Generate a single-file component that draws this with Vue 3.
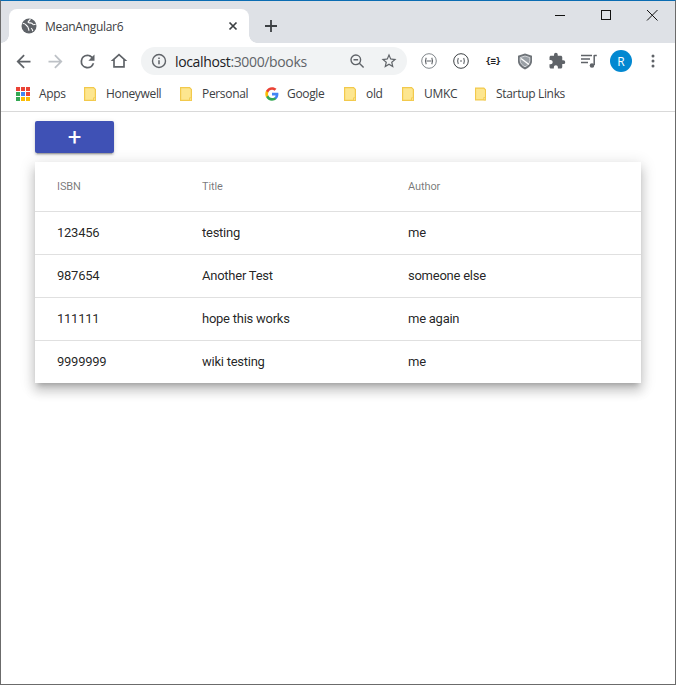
<script setup>
const bookmarks = [
  { label: 'Honeywell', kind: 'folder', width: 96 },
  { label: 'Personal', kind: 'folder', width: 85 },
  { label: 'Google', kind: 'google', width: 79 },
  { label: 'old', kind: 'folder', width: 58 },
  { label: 'UMKC', kind: 'folder', width: 73 },
  { label: 'Startup Links', kind: 'folder', width: 90 }
]
const books = [
  { isbn: '123456', title: 'testing', author: 'me' },
  { isbn: '987654', title: 'Another Test', author: 'someone else' },
  { isbn: '111111', title: 'hope this works', author: 'me again' },
  { isbn: '9999999', title: 'wiki testing', author: 'me' }
]
const appDots = ['#ea4335','#ea4335','#ea4335','#34a853','#4285f4','#ea4335','#34a853','#fbbc04','#fbbc04']
</script>

<template>
  <div class="window">
    <header class="titlebar">
      <div class="tab">
        <svg class="globe" width="16" height="16" viewBox="0 0 16 16">
          <circle cx="8" cy="8" r="7.5" fill="#5f6368"/>
          <path d="M1.800 5.600c1.600-.2 2.600.6 3.400 1.600.7.900 1.800 1.100 1.900 2.300.1 1 .8 1.500.8 3.300M9.300 1.200c-.4 1.300-1.500 1.500-2.100 2.500-.3.800.5 1.300 1.500 1.200 1.500-.1 2.500.2 3 1.200.4.900 1.700.6 2.900.2M11.800 13.200c-.2-1.300-.6-2.500-1.800-2.900" fill="none" stroke="#fff" stroke-width="1.100"/>
        </svg>
        <span class="tab-title">MeanAngular6</span>
        <svg class="tab-close" width="10" height="10" viewBox="0 0 10 10">
          <path d="M1.500 1.500l7 7M8.500 1.500l-7 7" stroke="#3c4043" stroke-width="1.700"/>
        </svg>
      </div>
      <svg class="newtab" width="14" height="14" viewBox="0 0 14 14">
        <path d="M7 1v12M1 7h12" stroke="#3c4043" stroke-width="1.800"/>
      </svg>
      <div class="winctl">
        <span class="winbtn"><svg width="12" height="12" viewBox="0 0 12 12"><path d="M1 6.500h10" stroke="#111" stroke-width="1"/></svg></span>
        <span class="winbtn"><svg width="12" height="12" viewBox="0 0 12 12"><rect x="1.500" y="1.500" width="9" height="9" fill="none" stroke="#111" stroke-width="1"/></svg></span>
        <span class="winbtn"><svg width="12" height="12" viewBox="0 0 12 12"><path d="M1 1l10.500 10.500M11.500 1L1 11.500" stroke="#111" stroke-width="1" fill="none"/></svg></span>
      </div>
    </header>

    <nav class="toolbar">
      <span class="slot"><svg width="21" height="21" viewBox="0 0 24 24"><path fill="#5f6368" d="M20 11H7.830l5.590-5.590L12 4l-8 8 8 8 1.410-1.410L7.830 13H20v-2z"/></svg></span>
      <span class="slot"><svg width="21" height="21" viewBox="0 0 24 24"><path fill="#bdc1c6" d="M12 4l-1.410 1.410L16.170 11H4v2h12.170l-5.580 5.590L12 20l8-8z"/></svg></span>
      <span class="slot"><svg width="21" height="21" viewBox="0 0 24 24"><path fill="#5f6368" d="M17.650 6.350A7.960 7.960 0 0 0 12 4a8 8 0 1 0 7.730 10h-2.080A6 6 0 1 1 12 6c1.660 0 3.140.69 4.220 1.780L13 11h7V4l-2.350 2.350z"/></svg></span>
      <span class="slot"><svg width="20" height="20" viewBox="0 0 24 24"><path fill="#5f6368" fill-rule="evenodd" d="M12 5.690l5 4.500V18H7v-7.810l5-4.500zM12 3L2 12h3v8h14v-8h3L12 3z"/></svg></span>

      <div class="omnibox">
        <svg class="info" width="16" height="16" viewBox="0 0 16 16">
          <circle cx="8" cy="8" r="6.500" fill="none" stroke="#5f6368" stroke-width="1.400"/>
          <path d="M8 7.200v4M8 4.600v1.500" stroke="#5f6368" stroke-width="1.500"/>
        </svg>
        <span class="url"><span class="host">localhost</span>:3000/books</span>
        <svg class="zoomout" width="16" height="16" viewBox="0 0 16 16">
          <circle cx="6.800" cy="6.800" r="4.800" fill="none" stroke="#5f6368" stroke-width="1.400"/>
          <path d="M10.300 10.300l4.300 4.300M4.500 6.800h4.600" stroke="#5f6368" stroke-width="1.400"/>
        </svg>
        <svg class="star" width="18" height="18" viewBox="0 0 24 24">
          <path fill="#5f6368" d="M22 9.240l-7.190-.62L12 2 9.190 8.630 2 9.240l5.460 4.730L5.820 21 12 17.270 18.180 21l-1.630-7.030L22 9.240zM12 15.400l-3.760 2.270 1-4.280-3.320-2.880 4.380-.38L12 6.100l1.710 4.040 4.380.38-3.320 2.880 1 4.280L12 15.400z"/>
        </svg>
      </div>

      <span class="slot">
        <svg width="16" height="16" viewBox="0 0 16 16">
          <circle cx="8" cy="8" r="7.300" fill="none" stroke="#80868b" stroke-width="1"/>
          <path d="M5.200 4.800C4.300 6.800 4.300 9.200 5.200 11.200M10.800 4.800c.9 2 .9 4.400 0 6.400M5.500 8h5" fill="none" stroke="#5f6368" stroke-width="1.100"/>
        </svg>
      </span>
      <span class="slot">
        <svg width="16" height="16" viewBox="0 0 16 16">
          <circle cx="8" cy="8" r="7.300" fill="none" stroke="#3c4043" stroke-width="1"/>
          <path d="M5.300 5C4.500 6.800 4.500 9.200 5.300 11M10.700 5c.8 1.800.8 4.200 0 6M7 8h2" fill="none" stroke="#5f6368" stroke-width="1.100"/>
        </svg>
      </span>
      <span class="slot braces">{≡}</span>
      <span class="slot">
        <svg width="16" height="17" viewBox="0 0 16 17">
          <path d="M8 .5l7 2.200v5.300c0 4-3 6.800-7 8.500-4-1.700-7-4.500-7-8.500V2.700L8 .5z" fill="#6f7479"/>
          <path d="M8 3l4.800 1.500v3.300c0 2.500-2 4.600-4.800 6-2.800-1.400-4.800-3.500-4.800-6V4.500L8 3z" fill="#9aa0a6" stroke="#e8eaed" stroke-width=".8"/>
          <path d="M4 5.500l8 6" stroke="#fff" stroke-width="1.300"/>
        </svg>
      </span>
      <span class="slot"><svg width="18" height="18" viewBox="0 0 24 24"><path fill="#5f6368" d="M20.500 11H19V7c0-1.100-.9-2-2-2h-4V3.500a2.500 2.500 0 0 0-5 0V5H4c-1.100 0-1.990.9-1.990 2v3.800H3.500c1.490 0 2.700 1.210 2.700 2.700s-1.210 2.700-2.700 2.700H2V20c0 1.100.9 2 2 2h3.800v-1.500c0-1.490 1.210-2.700 2.700-2.700s2.700 1.210 2.700 2.700V22H17c1.100 0 2-.9 2-2v-4h1.500a2.500 2.500 0 0 0 0-5z"/></svg></span>
      <span class="slot">
        <svg width="16" height="16" viewBox="0 0 16 16">
          <path d="M0 2.500h11M0 6h9M0 9.500h7" stroke="#5f6368" stroke-width="1.300" fill="none"/>
          <path d="M13.200 2.500h2.600M13.200 2v10" stroke="#5f6368" stroke-width="1.500" fill="none"/>
          <circle cx="11" cy="12.500" r="2.300" fill="#5f6368"/>
        </svg>
      </span>
      <span class="slot"><span class="avatar">R</span></span>
      <span class="slot">
        <svg width="4" height="14" viewBox="0 0 4 14"><circle cx="2" cy="2" r="1.500" fill="#5f6368"/><circle cx="2" cy="7" r="1.500" fill="#5f6368"/><circle cx="2" cy="12" r="1.500" fill="#5f6368"/></svg>
      </span>
    </nav>

    <div class="bookmarks">
      <div class="bm bm-apps">
        <span class="apps"><i v-for="(c, i) in appDots" :key="i" :style="{ background: c }"></i></span>
        <span>Apps</span>
      </div>
      <div v-for="b in bookmarks" :key="b.label" class="bm" :class="{ 'bm-google': b.kind === 'google' }" :style="{ width: b.width + 'px' }">
        <svg v-if="b.kind === 'folder'" width="12" height="14" viewBox="0 0 12 14">
          <path d="M.6.600h9l1.800 1.800v11H.6z" fill="#fde68f" stroke="#f2c94c" stroke-width="1.200"/>
          <path d="M9.500 13.400v-2.600h2v2.600z" fill="#fde68f" stroke="#f2c94c" stroke-width=".8"/>
        </svg>
        <svg v-else width="14" height="14" viewBox="0 0 48 48">
          <path fill="#4285f4" d="M46 24.500c0-1.600-.1-3.100-.4-4.500H24v8.800h12.400c-.5 2.900-2.100 5.300-4.600 6.900v5.700h7.400C43.500 36.400 46 31 46 24.500z"/>
          <path fill="#34a853" d="M24 47c6.200 0 11.400-2 15.200-5.600l-7.400-5.700c-2 1.400-4.700 2.200-7.800 2.200-6 0-11.100-4-12.900-9.500H3.500v5.900C7.300 41.800 15 47 24 47z"/>
          <path fill="#fbbc04" d="M11.100 28.900c-.5-1.400-.7-3-.7-4.900s.3-3.400.7-4.900v-5.900H3.500A23 23 0 0 0 1 24c0 3.700.9 7.200 2.500 10.800l7.600-5.900z"/>
          <path fill="#ea4335" d="M24 9.600c3.400 0 6.400 1.200 8.800 3.400l6.600-6.600C35.400 2.800 30.200 1 24 1 15 1 7.300 6.200 3.500 13.200l7.600 5.900C12.900 13.600 18 9.600 24 9.600z"/>
        </svg>
        <span>{{ b.label }}</span>
      </div>
    </div>

    <main class="content">
      <button class="add" type="button">+</button>
      <section class="card">
        <div class="row head">
          <span>ISBN</span><span>Title</span><span>Author</span>
        </div>
        <div v-for="b in books" :key="b.isbn" class="row">
          <span>{{ b.isbn }}</span><span>{{ b.title }}</span><span>{{ b.author }}</span>
        </div>
      </section>
    </main>
  </div>
</template>

<style scoped>
.window {
  width: 676px;
  height: 685px;
  box-sizing: border-box;
  border: 1px solid #6b6b6b;
  border-top-color: #0a6cb2;
  background: #fff;
  display: flex;
  flex-direction: column;
  overflow: hidden;
  font-family: "Open Sans", "Noto Sans", sans-serif;
}
.titlebar {
  height: 42px;
  flex: none;
  background: #dee1e6;
  display: flex;
  align-items: flex-start;
  padding-left: 8px;
}
.tab {
  position: relative;
  width: 240px;
  height: 34px;
  margin-top: 8px;
  box-sizing: border-box;
  background: #fff;
  border-radius: 8px 8px 0 0;
  display: flex;
  align-items: center;
  padding: 0 11px 0 12px;
}
.tab::before,
.tab::after {
  content: "";
  position: absolute;
  bottom: 0;
  width: 8px;
  height: 8px;
}
.tab::before {
  left: -8px;
  background: radial-gradient(circle at 0 0, transparent 7.500px, #fff 8px);
}
.tab::after {
  right: -8px;
  background: radial-gradient(circle at 100% 0, transparent 7.500px, #fff 8px);
}
.globe { flex: none; }
.tab-title {
  margin-left: 8px;
  font-size: 12px;
  letter-spacing: -0.3px;
  color: #3c4043;
  flex: 1;
}
.tab-close { flex: none; }
.newtab {
  margin: 18px 0 0 15px;
  flex: none;
}
.winctl {
  margin-left: auto;
  display: flex;
}
.winbtn {
  width: 46px;
  height: 28px;
  display: flex;
  align-items: center;
  justify-content: center;
}
.toolbar {
  height: 36px;
  flex: none;
  display: flex;
  align-items: center;
  padding-left: 6px;
}
.slot {
  width: 32px;
  height: 32px;
  flex: none;
  display: flex;
  align-items: center;
  justify-content: center;
}
.braces {
  font-family: "DejaVu Sans Mono", monospace;
  font-size: 9px;
  font-weight: 700;
  color: #202124;
  letter-spacing: -0.5px;
}
.omnibox {
  width: 266px;
  height: 28px;
  margin: 0 6px;
  flex: none;
  border-radius: 14px;
  background: #f1f3f4;
  display: flex;
  align-items: center;
  padding: 0 9px 0 10px;
  box-sizing: border-box;
}
.info { flex: none; }
.url {
  margin-left: 8px;
  font-size: 14px;
  letter-spacing: -0.36px;
  color: #5f6368;
  flex: 1;
  white-space: nowrap;
}
.host { color: #202124; }
.zoomout { flex: none; margin-right: 15px; }
.star { flex: none; }
.avatar {
  width: 22px;
  height: 22px;
  border-radius: 50%;
  background: #0288d1;
  color: #fff;
  font-size: 12px;
  display: flex;
  align-items: center;
  justify-content: center;
}
.bookmarks {
  height: 33px;
  flex: none;
  box-sizing: border-box;
  border-bottom: 1px solid #d9d9d9;
  display: flex;
  align-items: center;
  padding: 0 0 3px 15px;
  font-size: 12px;
  letter-spacing: -0.33px;
  color: #3c4043;
}
.bm {
  display: flex;
  align-items: center;
  gap: 10px;
  white-space: nowrap;
  flex: none;
}
.bm-apps { gap: 9px; width: 68px; }
.bm-google { gap: 8px; }
.apps {
  width: 14px;
  height: 14px;
  display: grid;
  grid-template-columns: repeat(3, 4px);
  grid-template-rows: repeat(3, 4px);
  gap: 1px;
}
.apps i { display: block; }
.content {
  flex: 1;
  padding: 9px 0 0 34px;
  font-family: Roboto, sans-serif;
}
.add {
  display: block;
  width: 79px;
  height: 32px;
  padding: 0;
  border: 0;
  border-radius: 2px;
  background: #3f51b5;
  color: #fff;
  font-family: Roboto, sans-serif;
  font-size: 24px;
  line-height: 32px;
  box-shadow: 0 3px 1px -2px rgba(0,0,0,.2), 0 2px 2px 0 rgba(0,0,0,.14), 0 1px 5px 0 rgba(0,0,0,.12);
}
.card {
  width: 606px;
  margin-top: 9px;
  background: #fff;
  box-shadow: 0 5px 5px -3px rgba(0,0,0,.2), 0 8px 10px 1px rgba(0,0,0,.14), 0 3px 14px 2px rgba(0,0,0,.12);
}
.row {
  height: 43px;
  box-sizing: border-box;
  display: grid;
  grid-template-columns: 145px 206px 1fr;
  align-items: center;
  padding: 0 0 2px 22px;
  border-bottom: 1px solid #e0e0e0;
  font-size: 13px;
  letter-spacing: -0.25px;
  color: rgba(0,0,0,.87);
}
.row:last-child {
  height: 42px;
  border-bottom: 0;
  padding-bottom: 1px;
}
.head {
  height: 50px;
  padding-bottom: 0;
  font-size: 11px;
  letter-spacing: -0.1px;
  color: rgba(0,0,0,.54);
}
</style>
